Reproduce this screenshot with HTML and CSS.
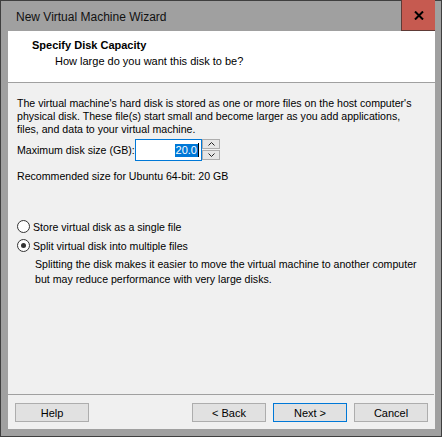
FILE: index.html
```html
<!DOCTYPE html>
<html>
<head>
<meta charset="utf-8">
<title>New Virtual Machine Wizard</title>
<link rel="stylesheet" href="styles.css">
</head>
<body>
<div class="window">
  <div class="titlebar">
    <span class="title">New Virtual Machine Wizard</span>
    <button class="close" aria-label="Close">
      <svg width="10" height="9" viewBox="0 0 10 9"><path d="M1 0.5 L9 8.5 M9 0.5 L1 8.5" stroke="#000" stroke-width="2" fill="none"/></svg>
    </button>
  </div>
  <div class="client">
    <div class="header">
      <div class="h-title">Specify Disk Capacity</div>
      <div class="h-sub">How large do you want this disk to be?</div>
    </div>
    <div class="content">
      <p class="intro">The virtual machine's hard disk is stored as one or more files on the host computer's<br>physical disk. These file(s) start small and become larger as you add applications,<br>files, and data to your virtual machine.</p>
      <div class="size-row">
        <label class="size-label">Maximum disk size (GB):</label>
        <div class="input"><span class="sel">20.0</span><span class="caret"></span></div>
        <div class="spin">
          <div class="spin-btn"><svg width="7" height="4" viewBox="0 0 7 4"><path d="M0.5 3.5 L3.5 0.5 L6.5 3.5" stroke="#222" stroke-width="1" fill="none"/></svg></div>
          <div class="spin-btn"><svg width="7" height="4" viewBox="0 0 7 4"><path d="M0.5 0.5 L3.5 3.5 L6.5 0.5" stroke="#222" stroke-width="1" fill="none"/></svg></div>
        </div>
      </div>
      <div class="recommend">Recommended size for Ubuntu 64-bit: 20 GB</div>
      <div class="radio-row first"><span class="radio"></span><span>Store virtual disk as a single file</span></div>
      <div class="radio-row"><span class="radio checked"></span><span>Split virtual disk into multiple files</span></div>
      <p class="desc">Splitting the disk makes it easier to move the virtual machine to another computer<br>but may reduce performance with very large disks.</p>
    </div>
    <div class="footer">
      <button class="btn">Help</button>
      <div class="spacer"></div>
      <button class="btn">&lt; Back</button>
      <button class="btn default">Next &gt;</button>
      <button class="btn">Cancel</button>
    </div>
  </div>
</div>
</body>
</html>
```
FILE: styles.css
```css
* { box-sizing: border-box; }
html, body { margin: 0; padding: 0; }
body {
  font-family: "Liberation Sans", Arial, sans-serif;
  font-size: 10.6px;
  color: #000;
  background: #a0a0a0;
}
.window {
  width: 442px;
  height: 437px;
  border: 1px solid #3f3f3f;
  background: #a0a0a0;
  display: flex;
  flex-direction: column;
}
.titlebar {
  height: 30px;
  display: flex;
  align-items: center;
  padding-left: 15px;
}
.title {
  font-size: 12px;
  color: #111;
  flex: 1;
  margin-top: 1px;
}
.close {
  width: 34px;
  height: 31px;
  margin-top: -1px;
  margin-right: 6px;
  align-self: flex-start;
  background: #c65a50;
  border: 1px solid #5e3a36;
  border-top: none;
  border-right: none;
  padding: 0;
  display: flex;
  align-items: center;
  justify-content: center;
}
.client {
  margin: 0 6px 6px 7px;
  height: 398px;
  background: #f0f0f0;
  display: flex;
  flex-direction: column;
}
.header {
  height: 52px;
  flex-shrink: 0;
  background: #fff;
  border-bottom: 1px solid #a0a0a0;
  padding: 8px 0 0 24px;
}
.h-title {
  font-weight: bold;
  font-size: 11px;
  line-height: 13px;
}
.h-sub {
  line-height: 13px;
  font-size: 11px;
  margin: 3px 0 0 23px;
}
.content {
  padding: 0 0 0 9px;
}
.intro {
  margin: 14px 0 0;
  line-height: 13px;
  white-space: nowrap;
}
.size-row {
  display: flex;
  align-items: center;
  margin-top: 3px;
  height: 22px;
}
.size-label {
  width: 118px;
  flex-shrink: 0;
  white-space: nowrap;
}
.input {
  width: 67px;
  height: 22px;
  flex-shrink: 0;
  border: 1px solid #0078d7;
  background: #fff;
  display: flex;
  align-items: center;
  justify-content: flex-end;
  padding-right: 2px;
}
.sel {
  background: #0078d7;
  color: #fff;
  font-size: 11px;
  line-height: 13px;
  padding: 0 1px;
}
.caret {
  width: 1px;
  height: 14px;
  background: #000;
}
.spin {
  display: flex;
  flex-direction: column;
  gap: 1px;
  height: 22px;
}
.spin-btn {
  width: 18px;
  height: 10px;
  background: #e5e5e5;
  border: 1px solid #adadad;
  display: flex;
  align-items: center;
  justify-content: center;
}
.recommend {
  margin-top: 9px;
  line-height: 13px;
}
.radio-row {
  display: flex;
  align-items: center;
  height: 19px;
  gap: 3px;
}
.radio-row.first { margin-top: 34px; }
.radio {
  width: 13px;
  height: 13px;
  border: 1px solid #333;
  border-radius: 50%;
  background: #fff;
  display: flex;
  align-items: center;
  justify-content: center;
}
.radio.checked::after {
  content: "";
  width: 5px;
  height: 5px;
  border-radius: 50%;
  background: #333;
}
.desc {
  margin: 2px 0 0 18px;
  line-height: 15px;
  white-space: nowrap;
}
.footer {
  margin-top: auto;
  border-top: 1px solid #a0a0a0;
  margin-right: 1px;
  padding: 8px 6px 7px 7px;
  display: flex;
  gap: 7px;
}
.spacer { flex: 1; }
.btn {
  width: 74px;
  height: 19px;
  background: #e1e1e1;
  border: 1px solid #adadad;
  font-family: inherit;
  font-size: 11px;
  color: #000;
  padding: 0;
}
.btn.default {
  border-color: #0078d7;
}
```
